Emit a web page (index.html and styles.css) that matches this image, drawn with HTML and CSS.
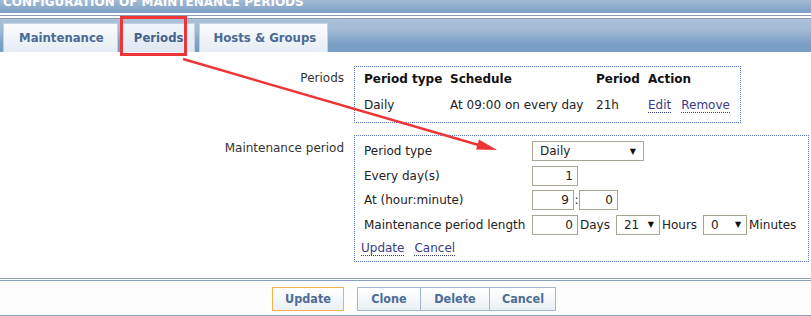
FILE: index.html
```html
<!DOCTYPE html>
<html lang="en">
  <head>
    <meta charset="UTF-8" />
    <title>Configuration of maintenance periods</title>
    <link rel="stylesheet" href="styles.css">
  </head>
  <body>
    <div class="page">
      <div class="title-bar"><span>CONFIGURATION OF MAINTENANCE PERIODS</span></div>
      <div class="rule"></div>

      <div class="tab-bar">
        <div class="tab">Maintenance</div>
        <div class="tab tab--active">Periods</div>
        <div class="tab tab--last">Hosts &amp; Groups</div>
      </div>

      <div class="content">
        <div class="form-row">
          <div class="form-label">Periods</div>
          <div class="box periods-box">
            <table class="periods-table">
              <thead>
                <tr>
                  <th class="col-type">Period type</th>
                  <th class="col-schedule">Schedule</th>
                  <th class="col-period">Period</th>
                  <th class="col-action">Action</th>
                </tr>
              </thead>
              <tbody>
                <tr>
                  <td>Daily</td>
                  <td>At 09:00 on every day</td>
                  <td>21h</td>
                  <td><a class="link" href="#">Edit</a><a class="link" href="#">Remove</a></td>
                </tr>
              </tbody>
            </table>
          </div>
        </div>

        <div class="form-row form-row--period">
          <div class="form-label">Maintenance period</div>
          <div class="box period-form">
            <div class="field">
              <div class="field-label">Period type</div>
              <div class="select select--type"><span>Daily</span><span class="select-arrow">▼</span></div>
            </div>
            <div class="field">
              <div class="field-label">Every day(s)</div>
              <input class="num num--day" type="text" value="1" />
            </div>
            <div class="field">
              <div class="field-label">At (hour:minute)</div>
              <input class="num num--hour" type="text" value="9" />
              <span class="colon">:</span>
              <input class="num num--minute" type="text" value="0" />
            </div>
            <div class="field">
              <div class="field-label">Maintenance period length</div>
              <input class="num num--day" type="text" value="0" />
              <span class="unit">Days</span>
              <div class="select select--small"><span>21</span><span class="select-arrow">▼</span></div>
              <span class="unit">Hours</span>
              <div class="select select--small"><span>0</span><span class="select-arrow">▼</span></div>
              <span class="unit">Minutes</span>
            </div>
            <div class="form-links">
              <a class="link" href="#">Update</a><a class="link" href="#">Cancel</a>
            </div>
          </div>
        </div>
      </div>

      <div class="footer">
        <div class="footer-bar">
          <button class="btn btn--main">Update</button>
          <div class="btn-group">
            <button class="btn">Clone</button>
            <button class="btn">Delete</button>
            <button class="btn">Cancel</button>
          </div>
        </div>
      </div>

      <!-- annotation drawn over the screenshot -->
      <div class="highlight"></div>
      <svg class="pointer" width="811" height="316" viewBox="0 0 811 316">
        <line x1="183" y1="59" x2="482" y2="146" stroke="#ee3535" stroke-width="2.4" />
        <polygon points="497,150 476,149.5 479,139.5" fill="#ee3535" />
      </svg>
    </div>
  </body>
</html>
```

FILE: styles.css
```css
* {
  margin: 0;
  padding: 0;
  box-sizing: border-box;
}

:root {
  font-family: "DejaVu Sans", Verdana, sans-serif;
  font-size: 12px;
  color: #222;
}

body {
  background: #fff;
}

.page {
  position: relative;
  width: 811px;
  height: 316px;
  overflow: hidden;
}

.title-bar {
  height: 13px;
  overflow: hidden;
  background: linear-gradient(to bottom, #a3bad4, #7b9fc4);
}

.title-bar > span {
  display: block;
  margin-top: -5px;
  padding-left: 3px;
  line-height: 14px;
  font-weight: bold;
  color: #fff;
  white-space: nowrap;
}

.rule {
  height: 4px;
  margin-top: 2px;
  border-top: 1px solid #8c9db4;
  border-bottom: 1px solid #8c9db4;
}

.tab-bar {
  display: flex;
  align-items: flex-end;
  gap: 4px;
  height: 33px;
  padding-left: 3px;
  background: linear-gradient(to bottom, #aac0d8 0%, #a5bbd4 30%, #7ba0c5 75%, #779dc3 100%);
}

.tab {
  height: 29px;
  padding: 0 13px 0 15px;
  line-height: 28px;
  font-family: "DejaVu Sans Condensed", "DejaVu Sans", sans-serif;
  font-size: 13px;
  font-weight: bold;
  color: #4b6a94;
  background: linear-gradient(to bottom, #fbfcfe, #e5ecf4);
  border: 1px solid #c3d1e2;
  border-bottom: none;
}

.tab--active {
  padding: 0 11px;
  background: linear-gradient(to bottom, #f1f5fa, #dfe7f1);
  color: #43618b;
}

.tab--last {
  padding: 0 11px 0 13px;
}

.content {
  padding-top: 14px;
}

.form-row {
  display: flex;
  align-items: flex-start;
}

.form-row--period {
  margin-top: 12px;
}

.form-label {
  width: 354px;
  padding: 5px 10px 0 0;
  line-height: 14px;
  text-align: right;
  color: #333;
}

.form-row--period .form-label {
  padding-top: 6px;
}

.box {
  border: 1px dotted #5a73c3;
}

.periods-box {
  width: 387px;
  padding: 0 9px 3px;
}

.periods-table {
  border-collapse: collapse;
  table-layout: fixed;
  width: 366px;
}

.periods-table th {
  height: 23px;
  text-align: left;
  font-weight: bold;
  color: #111;
}

.periods-table td {
  height: 29px;
  padding-top: 1px;
  color: #222;
}

.col-type { width: 86px; }
.col-schedule { width: 146px; }
.col-period { width: 52px; }
.col-action { width: 82px; }

.link {
  color: #3b3b86;
  text-decoration: none;
  border-bottom: 1px dotted #3b3b86;
}

.link + .link {
  margin-left: 10px;
}

.period-form {
  width: 455px;
  padding: 5px 9px 5px;
  display: flex;
  flex-direction: column;
  gap: 4.67px;
}

.field {
  display: flex;
  align-items: center;
  height: 20px;
}

.field > * {
  flex-shrink: 0;
}

.field-label {
  width: 168px;
}

.num {
  height: 20px;
  padding: 0 4px;
  border: 1px solid #aaa493;
  font: inherit;
  color: #222;
  text-align: right;
  background: #fff;
}

.num--day { width: 46px; }
.num--hour { width: 42px; }
.num--minute { width: 39px; }

.colon {
  width: 5px;
  text-align: center;
}

.unit {
  padding: 0 6px 0 2px;
}

.select {
  display: flex;
  align-items: center;
  justify-content: space-between;
  height: 20px;
  padding: 0 7px 0 7px;
  border: 1px solid #aaa493;
  background: #fff;
}

.select--type {
  width: 112px;
}

.select--small {
  width: 44px;
  padding-right: 5px;
}

.select-arrow {
  font-size: 8px;
  color: #111;
}

.form-links {
  margin: 0 0 0 -3px;
  line-height: 16px;
}

.footer {
  margin-top: 16px;
  border-top: 1px solid #8aa0bf;
  padding-top: 1px;
}

.footer-bar {
  display: flex;
  align-items: flex-start;
  gap: 13px;
  height: 36px;
  padding: 6px 0 0 272px;
  border-top: 1px solid #8aa0bf;
  border-bottom: 1px solid #8aa0bf;
  background: #fdfdfe;
}

.btn {
  height: 24px;
  padding: 0 12px;
  font-family: "DejaVu Sans Condensed", "DejaVu Sans", sans-serif;
  font-size: 12.5px;
  font-weight: bold;
  color: #4d6c98;
  background: linear-gradient(to bottom, #ffffff, #eaf0f6);
  border: 1px solid #a3b6d0;
}

.btn--main {
  width: 72px;
  border-color: #f5b04a;
}

.btn-group {
  display: flex;
}

.btn-group .btn {
  width: 64px;
}

.btn-group .btn + .btn {
  border-left: none;
  width: 69px;
}

.btn-group .btn:last-child {
  width: 66px;
}

.highlight {
  position: absolute;
  left: 120px;
  top: 16px;
  width: 67px;
  height: 40px;
  border: 3px solid #ee3535;
}

.pointer {
  position: absolute;
  left: 0;
  top: 0;
  pointer-events: none;
}
```
